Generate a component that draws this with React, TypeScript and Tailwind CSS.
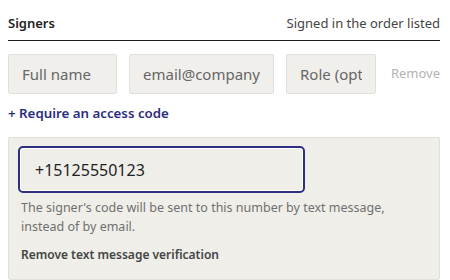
export default function App() {
  return (
    <div className="w-[450px] h-[280px] bg-white overflow-hidden" style={{ fontFamily: '"Noto Sans", "Open Sans", sans-serif' }}>
      <div className="ml-2 w-[432px]">
        <div className="flex items-center justify-between h-[41px] pt-[7px] border-b border-[#1a1a1a]">
          <span className="text-[13px] font-semibold text-[#222]">Signers</span>
          <span className="text-[13px] text-[#444]">Signed in the order listed</span>
        </div>

        <div className="flex items-center mt-[13px] h-[40px]">
          <input
            placeholder="Full name"
            className="w-[109px] h-[40px] px-[13px] text-[15px] bg-[#f0efeb] border border-[#e0dfda] rounded-[2px] placeholder:text-[#666] outline-none"
          />
          <input
            placeholder="email@company.com"
            className="ml-[12px] w-[145px] h-[40px] px-[13px] text-[15px] bg-[#f0efeb] border border-[#e0dfda] rounded-[2px] placeholder:text-[#666] outline-none"
          />
          <input
            placeholder="Role (optional)"
            className="ml-[12px] w-[90px] h-[40px] px-[13px] text-[15px] bg-[#f0efeb] border border-[#e0dfda] rounded-[2px] placeholder:text-[#666] outline-none"
          />
          <span className="ml-auto text-[13px] text-[#b3b3b3]">Remove</span>
        </div>

        <div className="mt-[10px] text-[13.3px] font-semibold text-[#2b2d7e] leading-[18px]">+ Require an access code</div>

        <div className="mt-[15px] h-[143px] bg-[#efeee9] border border-[#e0dfda] rounded-[2px] px-[9px] pt-[8px]">
          <div className="w-[287px] h-[47px] rounded-[5px] border-2 border-[#2e2f80] p-[1px] bg-white">
            <div className="h-full rounded-[3px] bg-[#efeee9] flex items-center px-[14px] text-[16px] text-[#1f1f1f]">
              +15125550123
            </div>
          </div>
          <p className="mt-[5px] ml-[3px] text-[12.5px] leading-[19px] text-[#707070]">
            The signer's code will be sent to this number by text message,<br />instead of by email.
          </p>
          <div className="mt-[10px] ml-[3px] text-[12px] font-semibold text-[#444]">Remove text message verification</div>
        </div>
      </div>
    </div>
  )
}
